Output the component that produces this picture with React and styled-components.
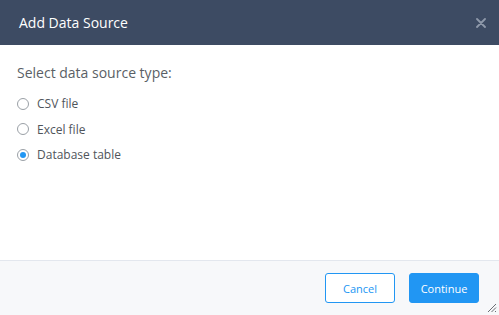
import styled, { createGlobalStyle } from "styled-components";
import { useState } from "react";

const GlobalStyle = createGlobalStyle`
  body {
    margin: 0;
    font-family: "Open Sans", "Noto Sans", sans-serif;
    background: #ffffff;
  }
`;

const options = [
  { id: "csv", label: "CSV file" },
  { id: "excel", label: "Excel file" },
  { id: "db", label: "Database table" },
];

const App = () => {
  const [type, setType] = useState("db");

  return (
    <>
      <GlobalStyle />
      <Dialog>
        <Header>
          <Title>Add Data Source</Title>
          <Close aria-label="close">
            <svg width="10" height="10" viewBox="0 0 10 10">
              <path
                d="M1 1L9 9M9 1L1 9"
                stroke="#8f99aa"
                strokeWidth="1.8"
                strokeLinecap="round"
              />
            </svg>
          </Close>
        </Header>
        <Body>
          <Prompt>Select data source type:</Prompt>
          <Options>
            {options.map((opt) => (
              <Option key={opt.id} onClick={() => setType(opt.id)}>
                <Radio checked={type === opt.id} />
                {opt.label}
              </Option>
            ))}
          </Options>
        </Body>
        <Footer>
          <Button>Cancel</Button>
          <Button primary>Continue</Button>
          <Grip width="10" height="10" viewBox="0 0 10 10">
            <path d="M9 1L1 9M9 4.5L4.5 9M9 8L8 9" stroke="#6b6f75" strokeWidth="1" />
          </Grip>
        </Footer>
      </Dialog>
    </>
  );
};

const Dialog = styled.div`
  height: 315px;
  display: flex;
  flex-direction: column;
  position: relative;
`;

const Header = styled.div`
  height: 45px;
  background: #3d4b63;
  display: flex;
  align-items: center;
  justify-content: space-between;
  padding: 0 12px 0 19px;
  box-sizing: border-box;
`;

const Title = styled.h1`
  margin: 0;
  font-size: 14px;
  font-weight: 400;
  color: #ffffff;
`;

const Close = styled.button`
  border: 0;
  background: none;
  padding: 0;
  width: 12px;
  height: 12px;
  display: flex;
  align-items: center;
  justify-content: center;
  cursor: pointer;
`;

const Body = styled.div`
  flex: 1;
  padding: 18px 17px 0;
`;

const Prompt = styled.div`
  font-size: 14px;
  color: #5a5f66;
  margin-bottom: 9px;
`;

const Options = styled.div`
  display: flex;
  flex-direction: column;
`;

const Option = styled.label`
  display: flex;
  align-items: center;
  gap: 8px;
  height: 25.5px;
  font-size: 12px;
  color: #50555b;
  cursor: pointer;
`;

const Radio = styled.span`
  width: 12px;
  height: 12px;
  border-radius: 50%;
  border: 1px solid #9aa0a6;
  box-sizing: border-box;
  position: relative;
  &::after {
    content: "";
    display: ${(p) => (p.checked ? "block" : "none")};
    position: absolute;
    left: 2px;
    top: 2px;
    width: 6px;
    height: 6px;
    border-radius: 50%;
    background: #2196f3;
  }
`;

const Footer = styled.div`
  height: 55px;
  border-top: 1px solid #e3e7ee;
  background: #f7f8fa;
  display: flex;
  align-items: center;
  justify-content: flex-end;
  gap: 14px;
  padding: 0 20px;
  box-sizing: border-box;
  position: relative;
`;

const Button = styled.button`
  width: 70px;
  height: 30px;
  border-radius: 3px;
  font-family: inherit;
  font-size: 11px;
  cursor: pointer;
  border: 1px solid #2196f3;
  background: ${(p) => (p.primary ? "#2196f3" : "#ffffff")};
  color: ${(p) => (p.primary ? "#ffffff" : "#2196f3")};
`;

const Grip = styled.svg`
  position: absolute;
  right: 2px;
  bottom: 2px;
`;

export default App;
